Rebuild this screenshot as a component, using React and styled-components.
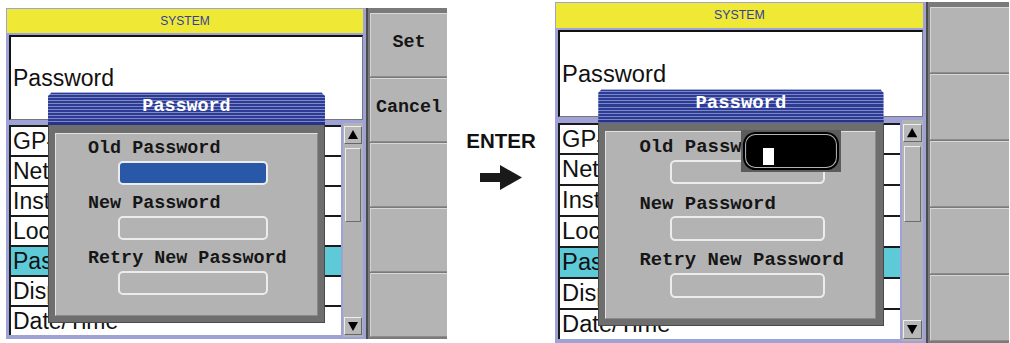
import React from 'react';
import styled, { createGlobalStyle } from 'styled-components';

const GlobalStyle = createGlobalStyle`
  html, body {
    margin: 0;
    padding: 0;
    background: #fff;
    overflow: hidden;
  }
`;

const Page = styled.div`
  display: flex;
  align-items: flex-start;
  width: 1010px;
  height: 343px;
  overflow: hidden;
`;

const Screen = styled.div`
  position: relative;
  display: flex;
  flex: none;
  zoom: ${({ $zoom }) => $zoom || 1};
  margin: ${({ $margin }) => $margin || 0};
`;

const Panel = styled.div`
  width: 356px;
  padding: 1px 3px 2px 1px;
  background: #9ea2d6;
  border-right: 2px solid #4c4c4c;
  display: flex;
  flex-direction: column;
`;

const Header = styled.div`
  height: 24px;
  background: #efe935;
  color: #34409c;
  font: 12px/24px "Liberation Sans", Arial, sans-serif;
  text-align: center;
`;

const InfoBox = styled.div`
  box-sizing: border-box;
  height: 85px;
  margin: 2px 0 0 2px;
  padding: 27px 0 0 2px;
  background: #fff;
  border-top: 2px solid #111;
  border-left: 2px solid #111;
  border-right: 1px solid #777;
  border-bottom: 1px solid #777;
  font: 23px/28px "Liberation Sans", Arial, sans-serif;
  color: #111;
`;

const List = styled.div`
  height: 214px;
  margin: 3px 0 0 2px;
  display: flex;
  gap: 2px;
`;

const Rows = styled.div`
  flex: 1;
  display: flex;
  flex-direction: column;
  padding-top: 2px;
`;

const Row = styled.div`
  box-sizing: border-box;
  height: 30px;
  padding-left: 2px;
  background: ${({ $active }) => ($active ? '#5ecad8' : '#fff')};
  border-top: 2px solid #1a1a1a;
  border-left: 2px solid #1a1a1a;
  font: 23px/28px "Liberation Sans", Arial, sans-serif;
  color: #111;
  white-space: nowrap;
  overflow: hidden;
`;

const ScrollBar = styled.div`
  width: 20px;
  padding: 3px 0 2px;
  background: #b3b3b3;
  display: flex;
  flex-direction: column;
  align-items: center;
`;

const ScrollButton = styled.div`
  box-sizing: border-box;
  width: 18px;
  height: 18px;
  margin-top: ${({ $down }) => ($down ? 'auto' : '0')};
  display: flex;
  align-items: center;
  justify-content: center;
  background: #b8b8b8;
  border-top: 1px solid #eee;
  border-left: 1px solid #eee;
  border-right: 1px solid #666;
  border-bottom: 1px solid #666;
`;

const Thumb = styled.div`
  box-sizing: border-box;
  width: 16px;
  height: 74px;
  margin-top: 4px;
  background: #b6b6b6;
  border-top: 1px solid #ececec;
  border-left: 1px solid #ececec;
  border-right: 1px solid #6c6c6c;
  border-bottom: 1px solid #6c6c6c;
`;

const SideBar = styled.div`
  width: 77px;
  padding: 5px 0 2px 2px;
  background: #7a7a7a;
  display: flex;
  flex-direction: column;
  gap: 1px;
`;

const SoftKey = styled.div`
  box-sizing: border-box;
  height: 64px;
  padding-bottom: 5px;
  display: flex;
  align-items: center;
  justify-content: center;
  background: #b4b4b4;
  border-top: 1px solid #d8d8d8;
  border-left: 1px solid #d2d2d2;
  border-bottom: 1px solid #8c8c8c;
  font: bold 18.4px/20px "Liberation Mono", "DejaVu Sans Mono", monospace;
  color: #151515;
`;

const Dialog = styled.div`
  position: absolute;
  left: 42px;
  top: 84px;
  width: 277px;
`;

const DialogTitle = styled.div`
  box-sizing: border-box;
  height: 33px;
  padding-bottom: 4px;
  display: flex;
  align-items: center;
  justify-content: center;
  background: repeating-linear-gradient(180deg, #2b3b98 0 2px, #8088bf 2px 3px);
  box-shadow: inset 0 -3px 0 #26338a, inset 0 1px 0 #aab0de;
  clip-path: polygon(4px 0, calc(100% - 4px) 0, 100% 4px, 100% 100%, 0 100%, 0 4px);
  font: bold 18.4px/20px "Liberation Mono", "DejaVu Sans Mono", monospace;
  color: #fff;
`;

const DialogBody = styled.div`
  position: relative;
  box-sizing: border-box;
  height: 198px;
  padding: 8px 6px 6px 6px;
  background: #6e6e6e;
  border-left: 1px solid #4a4a4a;
  border-right: 1px solid #4a4a4a;
  border-bottom: 1px solid #4a4a4a;
`;

const Inner = styled.div`
  box-sizing: border-box;
  height: 100%;
  padding: 5px 0 0 32px;
  background: #b3b3b3;
  border-top: 1px solid #e2e2e2;
  border-left: 1px solid #e2e2e2;
  border-right: 1px solid #8a8a8a;
  border-bottom: 1px solid #8a8a8a;
  display: flex;
  flex-direction: column;
  gap: 9px;
`;

const Group = styled.div`
  display: flex;
  flex-direction: column;
  gap: 2px;
`;

const Label = styled.div`
  font: bold 18.4px/20px "Liberation Mono", "DejaVu Sans Mono", monospace;
  color: #161616;
  white-space: nowrap;
`;

const Field = styled.div`
  box-sizing: border-box;
  width: 150px;
  height: 24px;
  margin-left: 30px;
  border: 2px solid #ececec;
  border-radius: 5px;
  background: ${({ $focus }) => ($focus ? '#2a58a8' : '#b3b3b3')};
`;

const EditPopup = styled.div`
  position: absolute;
  left: 139px;
  top: 40px;
  box-sizing: border-box;
  width: 97px;
  height: 41px;
  padding: 2px;
  background: #5c5c5c;
`;

const EditBox = styled.div`
  box-sizing: border-box;
  height: 100%;
  padding: 16px 0 0 19px;
  background: #000;
  border-radius: 12px;
  box-shadow: inset 0 0 0 2px #000, inset 0 0 0 3px #b4b4b4;
`;

const Caret = styled.div`
  width: 11px;
  height: 16px;
  background: #fff;
`;

const Middle = styled.div`
  width: 108px;
  flex: none;
  padding-top: 129px;
  display: flex;
  flex-direction: column;
  align-items: center;
  gap: 12px;
`;

const EnterText = styled.div`
  font: bold 20.5px/24px "Liberation Sans", Arial, sans-serif;
  color: #111;
`;

const rows = ['GP-IB', 'Network', 'Instrument', 'Lock', 'Password', 'Display', 'Date/Time'];

const Triangle = ({ down }) => (
  <svg width="10" height="10" viewBox="0 0 10 10">
    <polygon points={down ? '0,1 10,1 5,10' : '5,0 10,9 0,9'} fill="#000" />
  </svg>
);

const Arrow = () => (
  <svg width="42" height="25" viewBox="0 0 42 25">
    <polygon points="0,8 20,8 20,0 42,12.5 20,25 20,17 0,17" fill="#1a1a1a" />
  </svg>
);

const SystemScreen = ({ zoom, margin, keys, editing }) => (
  <Screen $zoom={zoom} $margin={margin}>
    <Panel>
      <Header>SYSTEM</Header>
      <InfoBox>Password</InfoBox>
      <List>
        <Rows>
          {rows.map((r) => (
            <Row key={r} $active={r === 'Password'}>{r}</Row>
          ))}
        </Rows>
        <ScrollBar>
          <ScrollButton><Triangle /></ScrollButton>
          <Thumb />
          <ScrollButton $down><Triangle down /></ScrollButton>
        </ScrollBar>
      </List>
    </Panel>
    <SideBar>
      {keys.map((k, i) => (
        <SoftKey key={i}>{k}</SoftKey>
      ))}
    </SideBar>
    <Dialog>
      <DialogTitle>Password</DialogTitle>
      <DialogBody>
        <Inner>
          <Group>
            <Label>Old Password</Label>
            <Field $focus={!editing} />
          </Group>
          <Group>
            <Label>New Password</Label>
            <Field />
          </Group>
          <Group>
            <Label>Retry New Password</Label>
            <Field />
          </Group>
        </Inner>
      </DialogBody>
      {editing && (
        <EditPopup>
          <EditBox>
            <Caret />
          </EditBox>
        </EditPopup>
      )}
    </Dialog>
  </Screen>
);

const App = () => (
  <>
    <GlobalStyle />
    <Page>
      <SystemScreen margin="8px 0 0 6px" keys={['Set', 'Cancel', '', '', '']} />
      <Middle>
        <EnterText>ENTER</EnterText>
        <Arrow />
      </Middle>
      <SystemScreen zoom={1.03} margin="2px 0 0 0" keys={['', '', '', '', '']} editing />
    </Page>
  </>
);

export default App;
